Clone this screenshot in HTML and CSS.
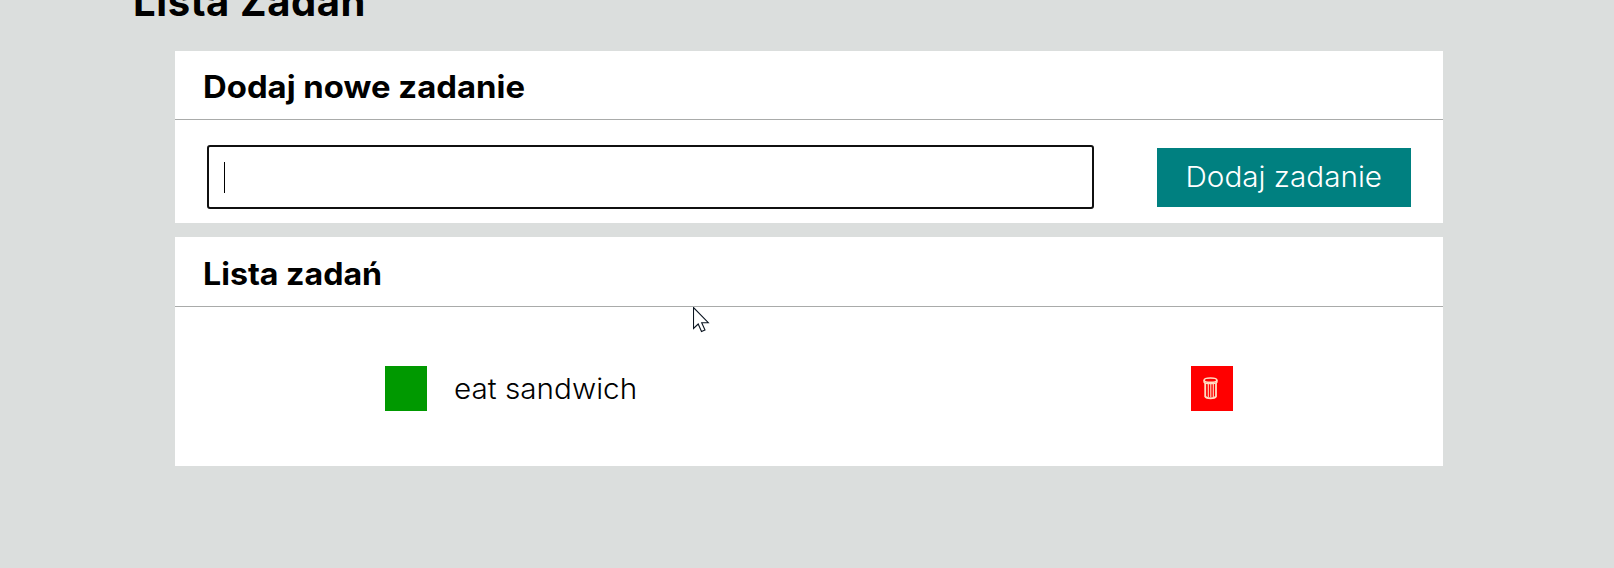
FILE: index.html
```html
<!DOCTYPE html>
<html lang="pl">
<head>
<meta charset="utf-8">
<title>Lista Zadań</title>
<link rel="stylesheet" href="styles.css">
</head>
<body>
<main class="container">
  <h1 class="title">Lista Zadań</h1>
  <section class="card card--form">
    <h2 class="card__header card__header--form"><span class="wide wide--form">Dodaj nowe zadanie</span></h2>
    <form class="form">
      <div class="form__input"><span class="form__caret"></span></div>
      <button class="form__button" type="button"><span class="wide wide--button">Dodaj zadanie</span></button>
    </form>
  </section>
  <section class="card card--list">
    <h2 class="card__header card__header--list"><span class="wide wide--list">Lista zadań</span></h2>
    <ul class="tasks">
      <li class="task">
        <button class="task__button task__button--done" type="button" aria-label="Gotowe"></button>
        <span class="task__text"><span class="wide wide--task">eat sandwich</span></span>
        <button class="task__button task__button--remove" type="button" aria-label="Usuń">
          <svg class="task__icon" width="16" height="23" viewBox="0 0 16 23" fill="none" stroke="#ffdfc4">
            <ellipse cx="7.500" cy="3.200" rx="6.400" ry="2.200" stroke-width="1.600"/>
            <path d="M1 3.200v2c2 1.800 11 1.800 13 0v-2" stroke-width="1.200"/>
            <path d="M2.200 6v13.500c1.500 2.400 9.300 2.400 10.800 0V6" stroke-width="1.800"/>
            <path d="M5.300 7v13M7.800 7v13.500M10.300 7v13" stroke-width="1.100"/>
          </svg>
        </button>
      </li>
    </ul>
  </section>
</main>
<svg class="cursor" width="18" height="27" viewBox="0 0 18 27"><path d="M.5.500v21l4.700-4.500 3.300 7.500 3.500-1.600-3.300-7.200h6.600z" fill="#fff" stroke="#0a1420" stroke-width="1.100"/></svg>
</body>
</html>
```
FILE: styles.css
```css
* { box-sizing: border-box; }

body {
  margin: 0;
  height: 568px;
  overflow: hidden;
  background: #dbdedd;
  color: #000;
  font-family: Inter, sans-serif;
}

.container {
  width: 1268px;
  margin-left: 175px;
}

.title {
  margin: -23px 0 24px -42px;
  height: 50px;
  line-height: 50px;
  font-size: 40px;
  font-weight: 700;
  letter-spacing: 0.6px;
  white-space: nowrap;
}

.card { background: #fff; }

.card--form {
  height: 172px;
  margin-bottom: 14px;
}

.card--list { height: 229px; }

.card__header {
  height: 69px;
  margin: 0;
  padding: 16px 28px 0;
  border-bottom: 1px solid #a9abaa;
  line-height: 40px;
  font-size: 31px;
  font-weight: 700;
  white-space: nowrap;
}

.card__header--list {
  height: 70px;
  padding-top: 17px;
}

.wide {
  display: inline-block;
  transform-origin: left center;
}

.wide--form { transform: scaleX(1.06); }
.wide--list { transform: scaleX(1.037); }
.wide--task { transform: scaleX(1.06); }

.wide--button {
  transform: scaleX(1.06);
  transform-origin: center;
}

.form {
  display: flex;
  align-items: flex-start;
  padding: 25px 32px 0;
}

.form__input {
  width: 887px;
  height: 64px;
  margin-right: 63px;
  padding: 15px;
  border: 2px solid #101010;
  border-radius: 3px;
}

.form__caret {
  display: block;
  width: 1px;
  height: 31px;
  background: #000;
}

.form__button {
  width: 254px;
  height: 59px;
  margin-top: 3px;
  padding: 0;
  border: 0;
  background: #008080;
  color: #fff;
  font: 350 28px/59px Inter, sans-serif;
  white-space: nowrap;
}

.tasks {
  margin: 0;
  padding: 59px 210px 0;
  list-style: none;
}

.task {
  display: flex;
  height: 45px;
}

.task__button {
  display: flex;
  align-items: center;
  justify-content: center;
  width: 42px;
  height: 45px;
  padding: 0;
  border: 0;
}

.task__button--done { background: #009900; }
.task__button--remove { background: #f00; }

.task__icon { margin-right: 2px; }

.task__text {
  flex: 1;
  padding-left: 27px;
  line-height: 46px;
  font-size: 28px;
  font-weight: 300;
}

.cursor {
  position: absolute;
  left: 693px;
  top: 307px;
}
```
